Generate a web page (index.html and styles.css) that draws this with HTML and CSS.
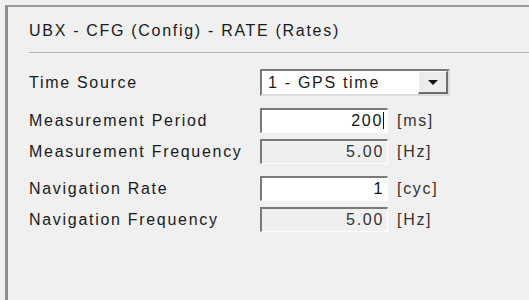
FILE: index.html
```html
<!DOCTYPE html>
<html lang="en">
<head>
    <meta charset="UTF-8">
    <title>UBX - CFG (Config) - RATE (Rates)</title>
    <link rel="stylesheet" href="styles.css">
</head>
<body>

<div class="panel">
    <div class="title">UBX - CFG (Config) - RATE (Rates)</div>
    <div class="sep"></div>

    <div class="form">
        <div class="row first">
            <span class="label">Time Source</span>
            <div class="combo">
                <span class="combo-text">1 - GPS time</span>
                <span class="combo-btn"><span class="arrow"></span></span>
            </div>
        </div>

        <div class="row group">
            <span class="label">Measurement Period</span>
            <div class="field edit">200<span class="caret"></span></div>
            <span class="unit">[ms]</span>
        </div>
        <div class="row">
            <span class="label">Measurement Frequency</span>
            <div class="field">5.00</div>
            <span class="unit">[Hz]</span>
        </div>

        <div class="row group">
            <span class="label">Navigation Rate</span>
            <div class="field edit">1</div>
            <span class="unit">[cyc]</span>
        </div>
        <div class="row">
            <span class="label">Navigation Frequency</span>
            <div class="field">5.00</div>
            <span class="unit">[Hz]</span>
        </div>
    </div>
</div>

</body>
</html>
```

FILE: styles.css
```css
body {
    margin: 0;
    background: #f0f0f0;
    font-family: 'Liberation Sans', Arial, sans-serif;
    font-size: 16px;
    letter-spacing: 1.7px;
    color: #1a1a1a;
}
.panel {
    margin: 5px 0 0 5px;
    height: 295px;
    border-top: 2px solid #9a9a9a;
    border-left: 3px solid #8c8c8c;
    box-sizing: border-box;
    padding-left: 21px;
}
.title {
    height: 45px;
    line-height: 47px;
}
.sep {
    height: 0;
    border-top: 1px solid #b4b4b4;
    border-bottom: 1px solid #fafafa;
}
.form {
    padding-top: 15px;
}
.row {
    display: flex;
    align-items: center;
    margin-top: 6px;
}
.row.first {
    margin-top: 0;
}
.row.group {
    margin-top: 12px;
}
.label {
    width: 231px;
    flex: none;
}
.combo {
    display: flex;
    width: 190px;
    height: 27px;
    box-sizing: border-box;
    background: #fff;
    border-top: 2px solid #7a7a7a;
    border-left: 2px solid #7a7a7a;
    border-right: 2px solid #dcdcdc;
    border-bottom: 2px solid #dcdcdc;
}
.combo-text {
    flex: 1;
    padding-left: 6px;
    line-height: 23px;
}
.combo-btn {
    width: 30px;
    background: #ececec;
    border-left: 1px solid #ffffff;
    border-top: 1px solid #ffffff;
    border-right: 2px solid #6e6e6e;
    border-bottom: 2px solid #6e6e6e;
    box-sizing: border-box;
    display: flex;
    align-items: center;
    justify-content: center;
}
.arrow {
    width: 0;
    height: 0;
    border-left: 5px solid transparent;
    border-right: 5px solid transparent;
    border-top: 5px solid #111;
}
.field {
    width: 128px;
    height: 25px;
    box-sizing: border-box;
    border-top: 2px solid #7a7a7a;
    border-left: 2px solid #7a7a7a;
    border-right: 1px solid #fdfdfd;
    border-bottom: 1px solid #fdfdfd;
    background: #efefef;
    text-align: right;
    padding-right: 3px;
    line-height: 22px;
    color: #333;
}
.field.edit {
    background: #fff;
    color: #111;
}
.caret {
    display: inline-block;
    width: 1px;
    height: 17px;
    background: #111;
    vertical-align: -3px;
    margin-left: 0;
}
.unit {
    margin-left: 9px;
    color: #333;
}
```
